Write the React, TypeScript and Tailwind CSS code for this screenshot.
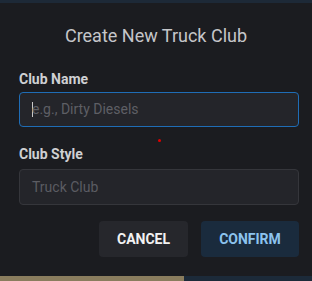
import React from "react";

export default function App() {
  return (
    <div
      className="w-[312px] h-[281px] flex flex-col overflow-hidden bg-[#1b1c20]"
      style={{ fontFamily: "Roboto, 'Liberation Sans', sans-serif" }}
    >
      <div className="h-[3px] bg-[#1d2937] shrink-0" />
      <div className="relative flex-1 flex flex-col bg-[#1b1c20]">
        <div className="pt-[21px] h-[45px] text-center text-[18px] leading-[24px] text-[#c5c6c9]">
          Create New Truck Club
        </div>
        <div className="pl-[19px] pr-[13px] flex flex-col">
          <div className="mt-[21px] h-[20px] text-[14px] leading-[20px] font-bold text-[#cfd0d3]">
            Club Name
          </div>
          <div className="mt-[3px] h-[35px] rounded-[4px] border border-[#1f6db6] bg-[#24252a] flex items-center pl-[12px]">
            <span className="w-px h-[15px] bg-[#c8c8c8] mr-[-1px]" />
            <span className="text-[14px] text-[#5e5f65]">e.g., Dirty Diesels</span>
          </div>
          <div className="mt-[17px] h-[20px] text-[14px] leading-[20px] font-bold text-[#cfd0d3]">
            Club Style
          </div>
          <div className="mt-[5px] h-[36px] rounded-[4px] border border-[#35363b] bg-[#24252a] flex items-center pl-[12px]">
            <span className="text-[14px] text-[#5b5c62]">Truck Club</span>
          </div>
          <div className="mt-[16px] flex justify-end gap-[13px]">
            <div className="w-[89px] h-[36px] rounded-[4px] bg-[#26272c] flex items-center justify-center text-[14px] font-bold text-[#f2f2f2]">
              CANCEL
            </div>
            <div className="w-[98px] h-[36px] rounded-[4px] bg-[#1a2b3d] flex items-center justify-center text-[14px] font-bold text-[#8cc3ee]">
              CONFIRM
            </div>
          </div>
        </div>
        <div className="absolute left-[158px] top-[136px] w-[3px] h-[3px] rounded-full bg-[#e00000]" />
      </div>
      <div className="h-[5px] shrink-0 flex">
        <div className="w-[184px] bg-[#8a7d5e]" />
        <div className="flex-1 bg-[#1c2a39]" />
      </div>
    </div>
  );
}
